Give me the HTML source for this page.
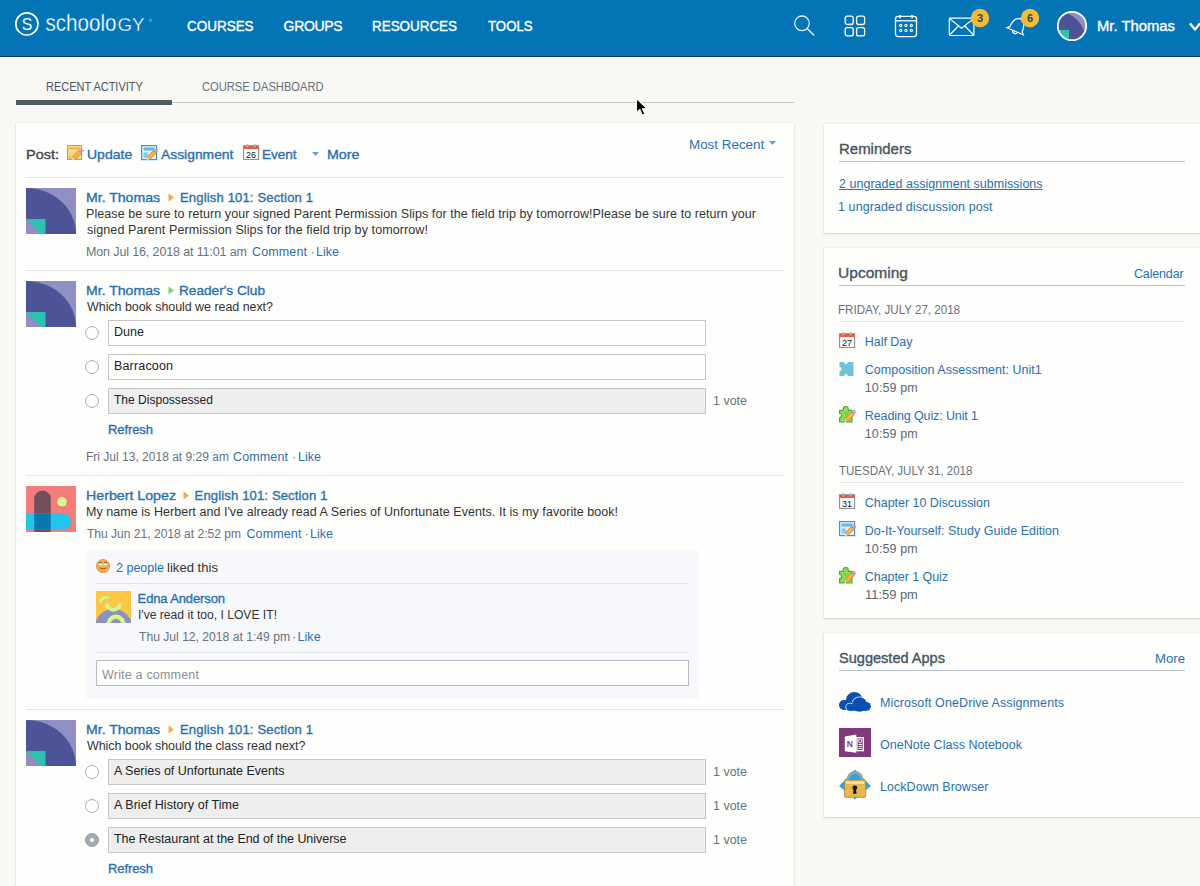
<!DOCTYPE html>
<html><head><meta charset="utf-8"><title>Schoology</title>
<style>
html,body{margin:0;padding:0;}
body{width:1200px;height:886px;overflow:hidden;position:relative;background:#f8f8f5;font-family:"Liberation Sans",sans-serif;}
.t{position:absolute;white-space:nowrap;line-height:1;}
.a{position:absolute;}
#hdr{position:absolute;left:0;top:0;width:1200px;height:56px;background:#0374b6;border-bottom:1px solid #1d3345;}
.card{position:absolute;background:#fefefd;box-shadow:0 1px 2px rgba(110,90,110,0.22),0 0 1px rgba(110,90,110,0.18);}
.sep{position:absolute;height:1px;background:#e3e5e8;}
.inp{position:absolute;box-sizing:border-box;border:1px solid #c4c6c8;background:#fefefd;}
.inp.g{background:#eeeeee;}
.radio{position:absolute;width:14px;height:14px;box-sizing:border-box;border:1px solid #adb0b3;border-radius:50%;background:#fdfdfd;}
.hline{position:absolute;height:1px;background:#b9c3cc;}
</style></head><body>
<div id="hdr"></div>
<!-- logo -->
<svg class="a" style="left:0px;top:0px" width="170" height="56" viewBox="0 0 170 56"><circle cx="26.9" cy="23.9" r="11.1" fill="none" stroke="#fff" stroke-width="1.7"/><text x="26.9" y="29.6" text-anchor="middle" font-family="Liberation Sans" font-size="17" fill="#fff" textLength="10.5" lengthAdjust="spacingAndGlyphs">S</text><text x="45.5" y="31.3" font-family="Liberation Sans" font-size="24" fill="#fff" stroke="#0374b6" stroke-width="0.3" style="paint-order:fill stroke"><tspan textLength="71" lengthAdjust="spacingAndGlyphs">schoolo</tspan><tspan font-size="17.6" dx="1" textLength="27" lengthAdjust="spacingAndGlyphs">GY</tspan></text><circle cx="150.5" cy="20.3" r="1.1" fill="none" stroke="#fff" stroke-width="0.4"/></svg>
<!-- tabs -->
<div class="a" style="left:16px;top:102px;width:778px;height:1px;background:#c6c7cd"></div>
<div class="a" style="left:16px;top:100px;width:156px;height:5px;background:#4f5b66"></div>
<!-- main card -->
<div class="card" style="left:16px;top:123px;width:778px;height:800px"></div>
<div class="sep" style="left:26px;top:177px;width:758px"></div>
<div class="sep" style="left:26px;top:270px;width:758px"></div>
<div class="sep" style="left:26px;top:475px;width:758px"></div>
<div class="sep" style="left:26px;top:709px;width:758px"></div>
<!-- sidebar cards -->
<div class="card" style="left:824px;top:124px;width:400px;height:109px"></div>
<div class="card" style="left:824px;top:248px;width:400px;height:370px"></div>
<div class="card" style="left:824px;top:633px;width:400px;height:184px"></div>
<div class="hline" style="left:839px;top:161px;width:346px"></div>
<div class="hline" style="left:839px;top:285px;width:346px"></div>
<div class="sep" style="left:839px;top:321px;width:346px"></div>
<div class="sep" style="left:839px;top:482px;width:346px"></div>
<div class="hline" style="left:839px;top:670px;width:346px"></div>
<!-- post 2 inputs -->
<div class="radio" style="left:85px;top:326px"></div>
<div class="radio" style="left:85px;top:360px"></div>
<div class="radio" style="left:85px;top:394px"></div>
<div class="inp" style="left:108px;top:320px;width:598px;height:26px"></div>
<div class="inp" style="left:108px;top:354px;width:598px;height:26px"></div>
<div class="inp g" style="left:108px;top:388px;width:598px;height:26px"></div>
<!-- comment area -->
<div class="a" style="left:86px;top:550px;width:613px;height:149px;background:#f7f8fb"></div>
<div class="sep" style="left:96px;top:583px;width:593px"></div>
<div class="sep" style="left:96px;top:652px;width:593px"></div>
<div class="inp" style="left:96px;top:660px;width:593px;height:26px;border-color:#b8bcc0"></div>
<!-- post 4 inputs -->
<div class="radio" style="left:85px;top:765px"></div>
<div class="radio" style="left:85px;top:799px"></div>
<div class="radio" style="left:85px;top:833px;background:#a0abb5;border-color:#98a3ad"></div>
<div class="a" style="left:90px;top:838px;width:4px;height:4px;border-radius:50%;background:#fff"></div>
<div class="inp g" style="left:108px;top:759px;width:598px;height:26px"></div>
<div class="inp g" style="left:108px;top:793px;width:598px;height:26px"></div>
<div class="inp g" style="left:108px;top:827px;width:598px;height:26px"></div>
<!-- avatars -->
<svg class="a" style="left:26px;top:188px" width="50" height="46" viewBox="0 0 50 46"><rect width="50" height="46" fill="#8f8fc3"/><path d="M0 0 A50 46 0 0 1 50 46 L0 46Z" fill="#4d5397"/><rect x="0" y="31" width="19.5" height="15" fill="#2fc0b0"/><path d="M0 31 L15 46 L0 46Z" fill="#8f8fc3"/></svg>
<svg class="a" style="left:26px;top:281px" width="50" height="46" viewBox="0 0 50 46"><rect width="50" height="46" fill="#8f8fc3"/><path d="M0 0 A50 46 0 0 1 50 46 L0 46Z" fill="#4d5397"/><rect x="0" y="31" width="19.5" height="15" fill="#2fc0b0"/><path d="M0 31 L15 46 L0 46Z" fill="#8f8fc3"/></svg>
<svg class="a" style="left:26px;top:720px" width="50" height="46" viewBox="0 0 50 46"><rect width="50" height="46" fill="#8f8fc3"/><path d="M0 0 A50 46 0 0 1 50 46 L0 46Z" fill="#4d5397"/><rect x="0" y="31" width="19.5" height="15" fill="#2fc0b0"/><path d="M0 31 L15 46 L0 46Z" fill="#8f8fc3"/></svg>
<svg class="a" style="left:26px;top:486px" width="50" height="46" viewBox="0 0 50 46"><rect width="50" height="46" fill="#f47c7a"/><path d="M8.2 46 V12.8 A8.3 8.3 0 0 1 24.8 12.8 V46Z" fill="#734f5e"/><path d="M0 27.5 H36.8 A8.15 8.15 0 0 1 36.8 43.8 H0Z" fill="#26c3ec"/><path d="M8.2 27.5 H24.8 V43.8 H8.2Z" fill="#0779ae"/><circle cx="36" cy="15.8" r="4.8" fill="#d8f58e"/></svg>
<svg class="a" style="left:96px;top:591px" width="35" height="32" viewBox="0 0 35 32"><rect width="35" height="32" fill="#fcc646"/><circle cx="17.5" cy="37" r="19" fill="#8e8fc4"/><path d="M11.1 12.5 A6.4 6.4 0 0 0 23.9 12.5" fill="none" stroke="#d6f68f" stroke-width="3.8"/><path d="M4.3 11.8 Q5.2 5 13.2 6.6" fill="none" stroke="#d6f68f" stroke-width="2.4"/><path d="M12.6 33.5 A7.4 7.8 0 0 1 27.4 33.5" fill="none" stroke="#d6f68f" stroke-width="4.2"/></svg>
<!-- header icons -->
<svg class="a" style="left:790px;top:10px" width="30" height="30" viewBox="0 0 30 30"><circle cx="12" cy="13.3" r="7.3" fill="none" stroke="#e6eff6" stroke-width="1.3"/><path d="M17.2 18.6 L24.2 25.4" stroke="#e6eff6" stroke-width="1.4"/></svg>
<svg class="a" style="left:844px;top:15px" width="22" height="22" viewBox="0 0 22 22" fill="none" stroke="#fff" stroke-width="1.3"><rect x="1.2" y="1.2" width="8" height="8.3" rx="2"/><rect x="12.6" y="1.2" width="8" height="8.3" rx="2"/><rect x="1.2" y="12.6" width="8" height="8.3" rx="2"/><rect x="12.6" y="12.6" width="8" height="8.3" rx="2"/><path d="M1.8 7.5 V4 M5 9 H8" stroke="#9fd6df" stroke-width="1"/></svg>
<svg class="a" style="left:894px;top:14px" width="24" height="24" viewBox="0 0 24 24" fill="none" stroke="#fff" stroke-width="1.3"><rect x="1.5" y="2.3" width="21" height="20.3" rx="2.5"/><path d="M1.5 6.8 H22.5"/><path d="M6 1 V4.2 M18 1 V4.2" stroke-width="1.6"/><g stroke-width="1.1"><circle cx="6.7" cy="11.5" r="1.1"/><circle cx="12" cy="11.5" r="1.1"/><circle cx="17.3" cy="11.5" r="1.1"/><circle cx="6.7" cy="16.4" r="1.1"/><circle cx="12" cy="16.4" r="1.1"/><circle cx="17.3" cy="16.4" r="1.1"/></g></svg>
<svg class="a" style="left:946px;top:14px" width="45" height="26" viewBox="0 0 45 26" fill="none" stroke="#fff" stroke-width="1.2"><rect x="3.3" y="4.2" width="24.6" height="17.3" rx="0.8"/><path d="M3.6 4.6 L15.6 14.3 L27.6 4.6 M3.6 21 L12.4 12 M27.6 21 L18.8 12"/></svg>
<svg class="a" style="left:1002px;top:10px" width="30" height="30" viewBox="0 0 30 30" fill="none" stroke="#fff" stroke-width="1.2"><g transform="rotate(24 16 16)"><path d="M6.5 22 L8.8 19.8 C9 15 9.5 9.5 15.5 8.5 C21.5 9.5 22 15 22.2 19.8 L24.5 22 Z"/><path d="M13 22.3 C13.2 25 17.8 25 18 22.3"/><path d="M15.5 8.5 V7.2"/></g></svg>
<svg class="a" style="left:969px;top:7px" width="22" height="22" viewBox="0 0 22 22"><circle cx="11" cy="11" r="9.2" fill="#f6bb37"/><text x="11" y="15.2" text-anchor="middle" font-family="Liberation Sans" font-weight="700" font-size="11" fill="#26476a">3</text></svg>
<svg class="a" style="left:1019px;top:7px" width="22" height="22" viewBox="0 0 22 22"><circle cx="11" cy="11" r="9.2" fill="#f6bb37"/><text x="11" y="15.2" text-anchor="middle" font-family="Liberation Sans" font-weight="700" font-size="11" fill="#26476a">6</text></svg>
<svg class="a" style="left:1056px;top:10px" width="32" height="32" viewBox="0 0 32 32"><defs><clipPath id="hc"><circle cx="16" cy="16" r="14"/></clipPath></defs><g clip-path="url(#hc)"><rect width="32" height="32" fill="#8f8fc3"/><path d="M0 1 A30 31 0 0 1 30 32 L0 32Z" fill="#4d5397"/><rect x="0" y="20" width="13" height="12" fill="#2fc0b0"/><path d="M0 24 L8 32 H0Z" fill="#4d5397" opacity="0"/></g><circle cx="16" cy="16" r="14.2" fill="none" stroke="#fff" stroke-width="1.8"/></svg>
<svg class="a" style="left:1186px;top:20px" width="16" height="14" viewBox="0 0 16 14"><path d="M4 3.5 L9 9.5 L14 3.5" fill="none" stroke="#fff" stroke-width="2.4"/></svg>
<!-- post bar icons -->
<svg class="a" style="left:67px;top:145px" width="17" height="16" viewBox="0 0 17 16"><rect x="0.5" y="0.5" width="14" height="14" fill="#fbd978" stroke="#d29a48"/><rect x="2" y="2.5" width="11" height="1.8" fill="#f5ad3a"/><path d="M2 6 H13" stroke="#f9eab4" stroke-width="0.8"/><path d="M2.5 10 V13 H5.5" stroke="#d0a070" stroke-width="0.8" fill="none"/><g transform="translate(5.8 14.2) rotate(-45)"><rect x="1.5" y="-1.9" width="9" height="3.8" fill="#f7b547" stroke="#c9572c" stroke-width="0.6"/><path d="M1.5 -1.9 L-1 0 L1.5 1.9Z" fill="#f3dcae"/><rect x="10.5" y="-1.9" width="1.6" height="3.8" fill="#9aa8b8"/><rect x="12.1" y="-1.9" width="2" height="3.8" fill="#f08ac6"/></g></svg>
<svg class="a" style="left:141px;top:145px" width="17" height="16" viewBox="0 0 17 16"><rect x="0.6" y="0.6" width="15" height="14" fill="#e3f2fb" stroke="#2e9bd8" stroke-width="1.2"/><rect x="2.5" y="2.5" width="11" height="3" fill="#62b7e6"/><rect x="2.5" y="7.3" width="4.3" height="5.4" fill="#8ccbee"/><g transform="translate(6.3 14.3) rotate(-45)"><rect x="1.5" y="-1.9" width="9" height="3.8" fill="#f7b547" stroke="#c9572c" stroke-width="0.6"/><path d="M1.5 -1.9 L-1 0 L1.5 1.9Z" fill="#f3dcae"/><rect x="10.5" y="-1.9" width="1.6" height="3.8" fill="#9aa8b8"/><rect x="12.1" y="-1.9" width="2" height="3.8" fill="#f08ac6"/></g></svg>
<svg class="a" style="left:243px;top:144px" width="17" height="17" viewBox="0 0 17 17"><rect x="0.6" y="1.8" width="15" height="13.6" fill="#fff" stroke="#8e8e8e" stroke-width="1.1"/><rect x="0.6" y="1.8" width="15" height="3.2" fill="#ec5a3c"/><rect x="3.4" y="0.2" width="1.8" height="3.2" fill="#aab3ba"/><rect x="10.8" y="0.2" width="1.8" height="3.2" fill="#aab3ba"/><text x="8.1" y="13.6" text-anchor="middle" font-family="Liberation Sans" font-size="9.5" fill="#111" textLength="10" lengthAdjust="spacingAndGlyphs">26</text></svg>
<svg class="a" style="left:312px;top:152px" width="7" height="4" viewBox="0 0 7 4"><path d="M0 0 H7 L3.5 4Z" fill="#6a9fd0"/></svg>
<svg class="a" style="left:769px;top:141px" width="7" height="4" viewBox="0 0 7 4"><path d="M0 0 H7 L3.5 4Z" fill="#6a9fd0"/></svg>
<!-- name arrows -->
<svg class="a" style="left:168px;top:193px" width="7" height="9" viewBox="0 0 7 9"><path d="M0.5 0.5 L6 4.5 L0.5 8.5Z" fill="#f5aa4c"/></svg>
<svg class="a" style="left:168px;top:286px" width="7" height="9" viewBox="0 0 7 9"><path d="M0.5 0.5 L6 4.5 L0.5 8.5Z" fill="#82cf7c"/></svg>
<svg class="a" style="left:183px;top:491px" width="7" height="9" viewBox="0 0 7 9"><path d="M0.5 0.5 L6 4.5 L0.5 8.5Z" fill="#f5aa4c"/></svg>
<svg class="a" style="left:168px;top:725px" width="7" height="9" viewBox="0 0 7 9"><path d="M0.5 0.5 L6 4.5 L0.5 8.5Z" fill="#f5aa4c"/></svg>
<!-- smiley -->
<svg class="a" style="left:96px;top:559px" width="14" height="14" viewBox="0 0 14 14"><circle cx="7" cy="7" r="6.6" fill="#f1ac4a" stroke="#d98a36" stroke-width="0.7"/><ellipse cx="7" cy="5" rx="4.5" ry="2.5" fill="#f8cf63" opacity="0.7"/><ellipse cx="4.7" cy="4.9" rx="1.6" ry="1.5" fill="#dfeaf5"/><ellipse cx="9.3" cy="4.9" rx="1.6" ry="1.5" fill="#dfeaf5"/><path d="M3 3.9 Q4.7 2.8 6.2 3.9 M7.8 3.9 Q9.3 2.8 11 3.9" stroke="#6a3f32" stroke-width="1" fill="none"/><path d="M3.8 9 Q7 10.8 10.2 9" fill="none" stroke="#a5592b" stroke-width="1"/></svg>
<!-- upcoming icons -->
<svg class="a" style="left:839px;top:332px" width="17" height="17" viewBox="0 0 17 17"><rect x="0.6" y="1.8" width="15" height="13.6" fill="#fff" stroke="#8e8e8e" stroke-width="1.1"/><rect x="0.6" y="1.8" width="15" height="3.2" fill="#ec5a3c"/><rect x="3.4" y="0.2" width="1.8" height="3.2" fill="#aab3ba"/><rect x="10.8" y="0.2" width="1.8" height="3.2" fill="#aab3ba"/><text x="8.1" y="13.6" text-anchor="middle" font-family="Liberation Sans" font-size="9.5" fill="#111" textLength="10" lengthAdjust="spacingAndGlyphs">27</text></svg>
<svg class="a" style="left:839px;top:362px" width="15" height="15" viewBox="0 0 15 15"><path d="M0.5 0 H5 A2 2 0 0 0 9 0 H14.5 V14 H9 A2 2 0 0 0 5 14 H0.5 V9 A2 2 0 0 0 0.5 5Z" fill="#6cc4d8"/></svg>
<svg class="a" style="left:839px;top:406px" width="18" height="17" viewBox="0 0 18 17"><path d="M0.6 4.4 H4.2 V3 A2.5 2.5 0 0 1 9.3 3 V4.4 H13 V16 H7.8 A1.5 1.5 0 0 0 5 16 H0.6 V11.5 A2 2 0 0 0 0.6 7.5Z" fill="#8ddc5a" stroke="#4fa82c" stroke-width="1.1"/><path d="M4 6 H10 L7 10Z" fill="#7cc447" opacity="0.7"/><g transform="translate(6.3 14.8) rotate(-45)"><rect x="1.5" y="-1.9" width="9" height="3.8" fill="#f7b547" stroke="#c9572c" stroke-width="0.6"/><path d="M1.5 -1.9 L-1 0 L1.5 1.9Z" fill="#f3dcae"/><rect x="10.5" y="-1.9" width="1.6" height="3.8" fill="#9aa8b8"/><rect x="12.1" y="-1.9" width="2" height="3.8" fill="#f08ac6"/></g></svg>
<svg class="a" style="left:839px;top:493px" width="17" height="17" viewBox="0 0 17 17"><rect x="0.6" y="1.8" width="15" height="13.6" fill="#fff" stroke="#8e8e8e" stroke-width="1.1"/><rect x="0.6" y="1.8" width="15" height="3.2" fill="#ec5a3c"/><rect x="3.4" y="0.2" width="1.8" height="3.2" fill="#aab3ba"/><rect x="10.8" y="0.2" width="1.8" height="3.2" fill="#aab3ba"/><text x="8.1" y="13.6" text-anchor="middle" font-family="Liberation Sans" font-size="9.5" fill="#111" textLength="10" lengthAdjust="spacingAndGlyphs">31</text></svg>
<svg class="a" style="left:839px;top:521px" width="17" height="16" viewBox="0 0 17 16"><rect x="0.6" y="0.6" width="15" height="14" fill="#e3f2fb" stroke="#2e9bd8" stroke-width="1.2"/><rect x="2.5" y="2.5" width="11" height="3" fill="#62b7e6"/><rect x="2.5" y="7.3" width="4.3" height="5.4" fill="#8ccbee"/><g transform="translate(6.3 14.3) rotate(-45)"><rect x="1.5" y="-1.9" width="9" height="3.8" fill="#f7b547" stroke="#c9572c" stroke-width="0.6"/><path d="M1.5 -1.9 L-1 0 L1.5 1.9Z" fill="#f3dcae"/><rect x="10.5" y="-1.9" width="1.6" height="3.8" fill="#9aa8b8"/><rect x="12.1" y="-1.9" width="2" height="3.8" fill="#f08ac6"/></g></svg>
<svg class="a" style="left:839px;top:567px" width="18" height="17" viewBox="0 0 18 17"><path d="M0.6 4.4 H4.2 V3 A2.5 2.5 0 0 1 9.3 3 V4.4 H13 V16 H7.8 A1.5 1.5 0 0 0 5 16 H0.6 V11.5 A2 2 0 0 0 0.6 7.5Z" fill="#8ddc5a" stroke="#4fa82c" stroke-width="1.1"/><path d="M4 6 H10 L7 10Z" fill="#7cc447" opacity="0.7"/><g transform="translate(6.3 14.8) rotate(-45)"><rect x="1.5" y="-1.9" width="9" height="3.8" fill="#f7b547" stroke="#c9572c" stroke-width="0.6"/><path d="M1.5 -1.9 L-1 0 L1.5 1.9Z" fill="#f3dcae"/><rect x="10.5" y="-1.9" width="1.6" height="3.8" fill="#9aa8b8"/><rect x="12.1" y="-1.9" width="2" height="3.8" fill="#f08ac6"/></g></svg>
<!-- app icons -->
<svg class="a" style="left:839px;top:691px" width="33" height="21" viewBox="0 0 33 21"><g fill="#0b4fb3"><circle cx="15.3" cy="9.5" r="8.5"/><circle cx="5" cy="14" r="5"/><rect x="5" y="12" width="12" height="7"/></g><g fill="#0b4fb3" stroke="#fff" stroke-width="1.5"><circle cx="20.5" cy="13.5" r="7.3"/><circle cx="27.5" cy="15.3" r="4.4"/><circle cx="10.8" cy="16.2" r="3.6"/></g><g fill="#0b4fb3"><circle cx="20.5" cy="13.5" r="7.3"/><circle cx="27.5" cy="15.3" r="4.4"/><circle cx="10.8" cy="16.2" r="3.6"/><rect x="10.8" y="15" width="16.7" height="4.8"/></g><rect x="7" y="19.8" width="25" height="1.2" fill="#fff" opacity="0"/></svg>
<svg class="a" style="left:839px;top:728px" width="32" height="29" viewBox="0 0 32 29"><rect width="32" height="29" fill="#803a7c"/><path d="M17.3 9.1 H25 V23.3 H17.3Z" fill="#fff"/><path d="M18.6 10.4 H23.7 V22 H18.6Z" fill="#803a7c"/><path d="M19.5 16.5 H23 M19.5 18.5 H23 M19.5 20.5 H23" stroke="#fff" stroke-width="0.9"/><circle cx="21.2" cy="13" r="1.7" fill="none" stroke="#fff" stroke-width="0.9"/><path d="M5.8 8.4 L17.3 6.4 V24.7 L5.8 23.3Z" fill="#fff"/><text x="10.9" y="18.8" text-anchor="middle" font-family="Liberation Sans" font-weight="700" font-size="8.5" fill="#803a7c">N</text></svg>
<svg class="a" style="left:838px;top:769px" width="34" height="31" viewBox="0 0 34 31"><path d="M17 0.6 L32.8 16.9 L17 30.5 L1.1 16.9Z" fill="#2ea3dc"/><path d="M10 12 V10.5 A7 7 0 0 1 24 10.5 V12" fill="none" stroke="#9ba1a8" stroke-width="2.8"/><rect x="6.5" y="11" width="21.2" height="17.4" rx="1.5" fill="#e8b84e" stroke="#b58838" stroke-width="0.8"/><rect x="8" y="12.3" width="18.2" height="2.6" fill="#f7e0a0"/><circle cx="16.8" cy="18.8" r="2.4" fill="#111"/><path d="M15.8 19.5 L15 24.8 H18.6 L17.8 19.5Z" fill="#111"/></svg>
<!-- cursor -->
<svg class="a" style="left:635px;top:97px" width="16" height="22" viewBox="0 0 16 22"><path d="M1.5 1.5 L1.5 15.4 L4.8 12.4 L7.4 18.2 L9.9 17.1 L7.4 11.7 L12 11.7Z" fill="#000" stroke="#fff" stroke-width="1.1" stroke-linejoin="round"/></svg>

<span class="t" id="t0" style="left:45.60px;top:81px;font-size:12.5px;font-weight:400;color:#4b5560;transform:scaleX(0.8783);transform-origin:0 0;">RECENT ACTIVITY</span>
<span class="t" id="t1" style="left:202.20px;top:81px;font-size:12.5px;font-weight:400;color:#66717c;transform:scaleX(0.8932);transform-origin:0 0;">COURSE DASHBOARD</span>
<span class="t" id="t2" style="left:186.60px;top:19px;font-size:14px;font-weight:600;color:#fff;transform:scaleX(0.9619);transform-origin:0 0;font-weight:400;-webkit-text-stroke:0.35px #fff;">COURSES</span>
<span class="t" id="t3" style="left:283.60px;top:19px;font-size:14px;font-weight:600;color:#fff;letter-spacing:-0.338px;font-weight:400;-webkit-text-stroke:0.35px #fff;">GROUPS</span>
<span class="t" id="t4" style="left:372.00px;top:19px;font-size:14px;font-weight:600;color:#fff;transform:scaleX(0.9584);transform-origin:0 0;font-weight:400;-webkit-text-stroke:0.35px #fff;">RESOURCES</span>
<span class="t" id="t5" style="left:488.40px;top:19px;font-size:14px;font-weight:600;color:#fff;transform:scaleX(0.9449);transform-origin:0 0;font-weight:400;-webkit-text-stroke:0.35px #fff;">TOOLS</span>
<span class="t" id="t6" style="left:1096.80px;top:19px;font-size:14px;font-weight:600;color:#fff;transform:scaleX(1.0590);transform-origin:0 0;font-weight:400;-webkit-text-stroke:0.35px #fff;">Mr. Thomas</span>
<span class="t" id="t7" style="left:26.20px;top:148px;font-size:13px;font-weight:600;color:#3d4650;transform:scaleX(1.1139);transform-origin:0 0;font-weight:400;-webkit-text-stroke:0.35px #3d4650;">Post:</span>
<span class="t" id="t8" style="left:87.40px;top:148px;font-size:13px;font-weight:600;color:#2a70b0;transform:scaleX(1.0782);transform-origin:0 0;font-weight:400;-webkit-text-stroke:0.35px #2a70b0;">Update</span>
<span class="t" id="t9" style="left:161.00px;top:148px;font-size:13px;font-weight:600;color:#2a70b0;transform:scaleX(1.0659);transform-origin:0 0;font-weight:400;-webkit-text-stroke:0.35px #2a70b0;">Assignment</span>
<span class="t" id="t10" style="left:262.40px;top:148px;font-size:13px;font-weight:600;color:#2a70b0;transform:scaleX(1.0406);transform-origin:0 0;font-weight:400;-webkit-text-stroke:0.35px #2a70b0;">Event</span>
<span class="t" id="t11" style="left:326.60px;top:148px;font-size:13px;font-weight:600;color:#2a70b0;transform:scaleX(1.0937);transform-origin:0 0;font-weight:400;-webkit-text-stroke:0.35px #2a70b0;">More</span>
<span class="t" id="t12" style="left:688.80px;top:139px;font-size:12.5px;font-weight:400;color:#2a70b0;transform:scaleX(1.0717);transform-origin:0 0;">Most Recent</span>
<span class="t" id="t13" style="left:86.00px;top:191px;font-size:13px;font-weight:600;color:#2a70b0;transform:scaleX(1.0820);transform-origin:0 0;font-weight:400;-webkit-text-stroke:0.35px #2a70b0;">Mr. Thomas</span>
<span class="t" id="t14" style="left:180.00px;top:191px;font-size:13px;font-weight:600;color:#2a70b0;letter-spacing:0.173px;font-weight:400;-webkit-text-stroke:0.35px #2a70b0;">English 101: Section 1</span>
<span class="t" id="t15" style="left:86.00px;top:208px;font-size:12.5px;font-weight:400;color:#333333;letter-spacing:0.077px;">Please be sure to return your signed Parent Permission Slips for the field trip by tomorrow!Please be sure to return your</span>
<span class="t" id="t16" style="left:87.00px;top:224px;font-size:12.5px;font-weight:400;color:#333333;letter-spacing:0.100px;">signed Parent Permission Slips for the field trip by tomorrow!</span>
<span class="t" id="t17" style="left:86.00px;top:246px;font-size:12.5px;font-weight:400;color:#66737f;letter-spacing:-0.128px;">Mon Jul 16, 2018 at 11:01 am</span>
<span class="t" id="t18" style="left:252.00px;top:246px;font-size:12.5px;font-weight:400;color:#2a70b0;letter-spacing:0.135px;">Comment</span>
<span class="t" id="t19" style="left:310.50px;top:246px;font-size:12.5px;font-weight:400;color:#66737f;">·</span>
<span class="t" id="t20" style="left:316.00px;top:246px;font-size:12.5px;font-weight:400;color:#2a70b0;letter-spacing:0.021px;">Like</span>
<span class="t" id="t21" style="left:86.00px;top:284px;font-size:13px;font-weight:600;color:#2a70b0;transform:scaleX(1.0820);transform-origin:0 0;font-weight:400;-webkit-text-stroke:0.35px #2a70b0;">Mr. Thomas</span>
<span class="t" id="t22" style="left:179.00px;top:284px;font-size:13px;font-weight:600;color:#2a70b0;transform:scaleX(1.0492);transform-origin:0 0;font-weight:400;-webkit-text-stroke:0.35px #2a70b0;">Reader's Club</span>
<span class="t" id="t23" style="left:87.00px;top:301px;font-size:12.5px;font-weight:400;color:#333333;letter-spacing:-0.054px;">Which book should we read next?</span>
<span class="t" id="t24" style="left:114.00px;top:326px;font-size:12.5px;font-weight:400;color:#222;letter-spacing:0.036px;">Dune</span>
<span class="t" id="t25" style="left:114.00px;top:360px;font-size:12.5px;font-weight:400;color:#222;letter-spacing:0.164px;">Barracoon</span>
<span class="t" id="t26" style="left:114.00px;top:394px;font-size:12.5px;font-weight:400;color:#222;transform:scaleX(0.9628);transform-origin:0 0;">The Dispossessed</span>
<span class="t" id="t27" style="left:713.00px;top:395px;font-size:12.5px;font-weight:400;color:#66737f;letter-spacing:-0.013px;">1 vote</span>
<span class="t" id="t28" style="left:108.00px;top:423px;font-size:13px;font-weight:600;color:#2a70b0;letter-spacing:-0.089px;font-weight:400;-webkit-text-stroke:0.35px #2a70b0;">Refresh</span>
<span class="t" id="t29" style="left:86.00px;top:451px;font-size:12.5px;font-weight:400;color:#66737f;transform:scaleX(0.9616);transform-origin:0 0;">Fri Jul 13, 2018 at 9:29 am</span>
<span class="t" id="t30" style="left:233.00px;top:451px;font-size:12.5px;font-weight:400;color:#2a70b0;letter-spacing:0.135px;">Comment</span>
<span class="t" id="t31" style="left:292.00px;top:451px;font-size:12.5px;font-weight:400;color:#66737f;">·</span>
<span class="t" id="t32" style="left:298.00px;top:451px;font-size:12.5px;font-weight:400;color:#2a70b0;letter-spacing:0.021px;">Like</span>
<span class="t" id="t33" style="left:86.00px;top:489px;font-size:13px;font-weight:600;color:#2a70b0;transform:scaleX(1.0924);transform-origin:0 0;font-weight:400;-webkit-text-stroke:0.35px #2a70b0;">Herbert Lopez</span>
<span class="t" id="t34" style="left:194.60px;top:489px;font-size:13px;font-weight:600;color:#2a70b0;letter-spacing:0.163px;font-weight:400;-webkit-text-stroke:0.35px #2a70b0;">English 101: Section 1</span>
<span class="t" id="t35" style="left:86.00px;top:506px;font-size:12.5px;font-weight:400;color:#333333;letter-spacing:0.046px;">My name is Herbert and I've already read A Series of Unfortunate Events. It is my favorite book!</span>
<span class="t" id="t36" style="left:87.00px;top:528px;font-size:12.5px;font-weight:400;color:#66737f;transform:scaleX(0.9634);transform-origin:0 0;">Thu Jun 21, 2018 at 2:52 pm</span>
<span class="t" id="t37" style="left:246.40px;top:528px;font-size:12.5px;font-weight:400;color:#2a70b0;letter-spacing:0.135px;">Comment</span>
<span class="t" id="t38" style="left:304.50px;top:528px;font-size:12.5px;font-weight:400;color:#66737f;">·</span>
<span class="t" id="t39" style="left:310.00px;top:528px;font-size:12.5px;font-weight:400;color:#2a70b0;letter-spacing:0.021px;">Like</span>
<span class="t" id="t40" style="left:116.00px;top:562px;font-size:12.5px;font-weight:400;color:#2a70b0;letter-spacing:0.004px;">2 people</span>
<span class="t" id="t41" style="left:167.00px;top:562px;font-size:12.5px;font-weight:400;color:#333333;transform:scaleX(1.0485);transform-origin:0 0;">liked this</span>
<span class="t" id="t42" style="left:137.60px;top:592px;font-size:13px;font-weight:600;color:#2a70b0;letter-spacing:-0.126px;font-weight:400;-webkit-text-stroke:0.35px #2a70b0;">Edna Anderson</span>
<span class="t" id="t43" style="left:137.60px;top:609px;font-size:12.5px;font-weight:400;color:#333333;transform:scaleX(0.9692);transform-origin:0 0;">I've read it too, I LOVE IT!</span>
<span class="t" id="t44" style="left:138.60px;top:631px;font-size:12.5px;font-weight:400;color:#66737f;transform:scaleX(0.9700);transform-origin:0 0;">Thu Jul 12, 2018 at 1:49 pm</span>
<span class="t" id="t45" style="left:292.00px;top:631px;font-size:12.5px;font-weight:400;color:#66737f;">·</span>
<span class="t" id="t46" style="left:297.60px;top:631px;font-size:12.5px;font-weight:400;color:#2a70b0;letter-spacing:0.021px;">Like</span>
<span class="t" id="t47" style="left:102.00px;top:669px;font-size:12.5px;font-weight:400;color:#8a8f94;letter-spacing:0.196px;">Write a comment</span>
<span class="t" id="t48" style="left:86.00px;top:723px;font-size:13px;font-weight:600;color:#2a70b0;transform:scaleX(1.0820);transform-origin:0 0;font-weight:400;-webkit-text-stroke:0.35px #2a70b0;">Mr. Thomas</span>
<span class="t" id="t49" style="left:180.00px;top:723px;font-size:13px;font-weight:600;color:#2a70b0;letter-spacing:0.173px;font-weight:400;-webkit-text-stroke:0.35px #2a70b0;">English 101: Section 1</span>
<span class="t" id="t50" style="left:87.00px;top:740px;font-size:12.5px;font-weight:400;color:#333333;letter-spacing:-0.069px;">Which book should the class read next?</span>
<span class="t" id="t51" style="left:114.00px;top:765px;font-size:12.5px;font-weight:400;color:#222;letter-spacing:-0.012px;">A Series of Unfortunate Events</span>
<span class="t" id="t52" style="left:114.00px;top:799px;font-size:12.5px;font-weight:400;color:#222;letter-spacing:0.061px;">A Brief History of Time</span>
<span class="t" id="t53" style="left:114.00px;top:833px;font-size:12.5px;font-weight:400;color:#222;letter-spacing:-0.044px;">The Restaurant at the End of the Universe</span>
<span class="t" id="t54" style="left:713.00px;top:766px;font-size:12.5px;font-weight:400;color:#66737f;letter-spacing:-0.013px;">1 vote</span>
<span class="t" id="t55" style="left:713.00px;top:800px;font-size:12.5px;font-weight:400;color:#66737f;letter-spacing:-0.013px;">1 vote</span>
<span class="t" id="t56" style="left:713.00px;top:834px;font-size:12.5px;font-weight:400;color:#66737f;letter-spacing:-0.013px;">1 vote</span>
<span class="t" id="t57" style="left:108.00px;top:862px;font-size:13px;font-weight:600;color:#2a70b0;letter-spacing:-0.089px;font-weight:400;-webkit-text-stroke:0.35px #2a70b0;">Refresh</span>
<span class="t" id="t58" style="left:838.60px;top:142px;font-size:14px;font-weight:600;color:#4a5560;transform:scaleX(1.0694);transform-origin:0 0;font-weight:400;-webkit-text-stroke:0.35px #4a5560;">Reminders</span>
<span class="t" id="t59" style="left:839.00px;top:178px;font-size:12.5px;font-weight:400;color:#2a70b0;letter-spacing:0.022px;text-decoration:underline;">2 ungraded assignment submissions</span>
<span class="t" id="t60" style="left:838.00px;top:201px;font-size:12.5px;font-weight:400;color:#2a70b0;letter-spacing:0.096px;">1 ungraded discussion post</span>
<span class="t" id="t61" style="left:838.00px;top:266px;font-size:14px;font-weight:600;color:#4a5560;transform:scaleX(1.1106);transform-origin:0 0;font-weight:400;-webkit-text-stroke:0.35px #4a5560;">Upcoming</span>
<span class="t" id="t62" style="left:1134.00px;top:268px;font-size:12.5px;font-weight:400;color:#2a70b0;letter-spacing:-0.162px;">Calendar</span>
<span class="t" id="t63" style="left:838.00px;top:304px;font-size:12px;font-weight:400;color:#66717c;transform:scaleX(0.9643);transform-origin:0 0;">FRIDAY, JULY 27, 2018</span>
<span class="t" id="t64" style="left:864.80px;top:336px;font-size:12.5px;font-weight:400;color:#2a70b0;letter-spacing:-0.048px;">Half Day</span>
<span class="t" id="t65" style="left:864.80px;top:364px;font-size:12.5px;font-weight:400;color:#2a70b0;letter-spacing:0.019px;">Composition Assessment: Unit1</span>
<span class="t" id="t66" style="left:864.80px;top:382px;font-size:12.5px;font-weight:400;color:#5c6874;letter-spacing:0.096px;">10:59 pm</span>
<span class="t" id="t67" style="left:864.80px;top:410px;font-size:12.5px;font-weight:400;color:#2a70b0;letter-spacing:-0.113px;">Reading Quiz: Unit 1</span>
<span class="t" id="t68" style="left:864.80px;top:428px;font-size:12.5px;font-weight:400;color:#5c6874;letter-spacing:0.096px;">10:59 pm</span>
<span class="t" id="t69" style="left:839.00px;top:465px;font-size:12px;font-weight:400;color:#66717c;transform:scaleX(0.9583);transform-origin:0 0;">TUESDAY, JULY 31, 2018</span>
<span class="t" id="t70" style="left:864.80px;top:497px;font-size:12.5px;font-weight:400;color:#2a70b0;letter-spacing:-0.028px;">Chapter 10 Discussion</span>
<span class="t" id="t71" style="left:864.80px;top:525px;font-size:12.5px;font-weight:400;color:#2a70b0;letter-spacing:0.024px;">Do-It-Yourself: Study Guide Edition</span>
<span class="t" id="t72" style="left:864.80px;top:543px;font-size:12.5px;font-weight:400;color:#5c6874;letter-spacing:0.096px;">10:59 pm</span>
<span class="t" id="t73" style="left:864.80px;top:571px;font-size:12.5px;font-weight:400;color:#2a70b0;letter-spacing:-0.068px;">Chapter 1 Quiz</span>
<span class="t" id="t74" style="left:864.80px;top:589px;font-size:12.5px;font-weight:400;color:#5c6874;transform:scaleX(1.0312);transform-origin:0 0;">11:59 pm</span>
<span class="t" id="t75" style="left:839.00px;top:651px;font-size:14px;font-weight:600;color:#4a5560;transform:scaleX(1.0394);transform-origin:0 0;font-weight:400;-webkit-text-stroke:0.35px #4a5560;">Suggested Apps</span>
<span class="t" id="t76" style="left:1154.60px;top:653px;font-size:12.5px;font-weight:400;color:#2a70b0;transform:scaleX(1.0532);transform-origin:0 0;">More</span>
<span class="t" id="t77" style="left:880.00px;top:697px;font-size:12.5px;font-weight:400;color:#2a70b0;letter-spacing:0.093px;">Microsoft OneDrive Assignments</span>
<span class="t" id="t78" style="left:880.00px;top:739px;font-size:12.5px;font-weight:400;color:#2a70b0;letter-spacing:0.012px;">OneNote Class Notebook</span>
<span class="t" id="t79" style="left:880.00px;top:781px;font-size:12.5px;font-weight:400;color:#2a70b0;letter-spacing:0.048px;">LockDown Browser</span>
</body></html>
